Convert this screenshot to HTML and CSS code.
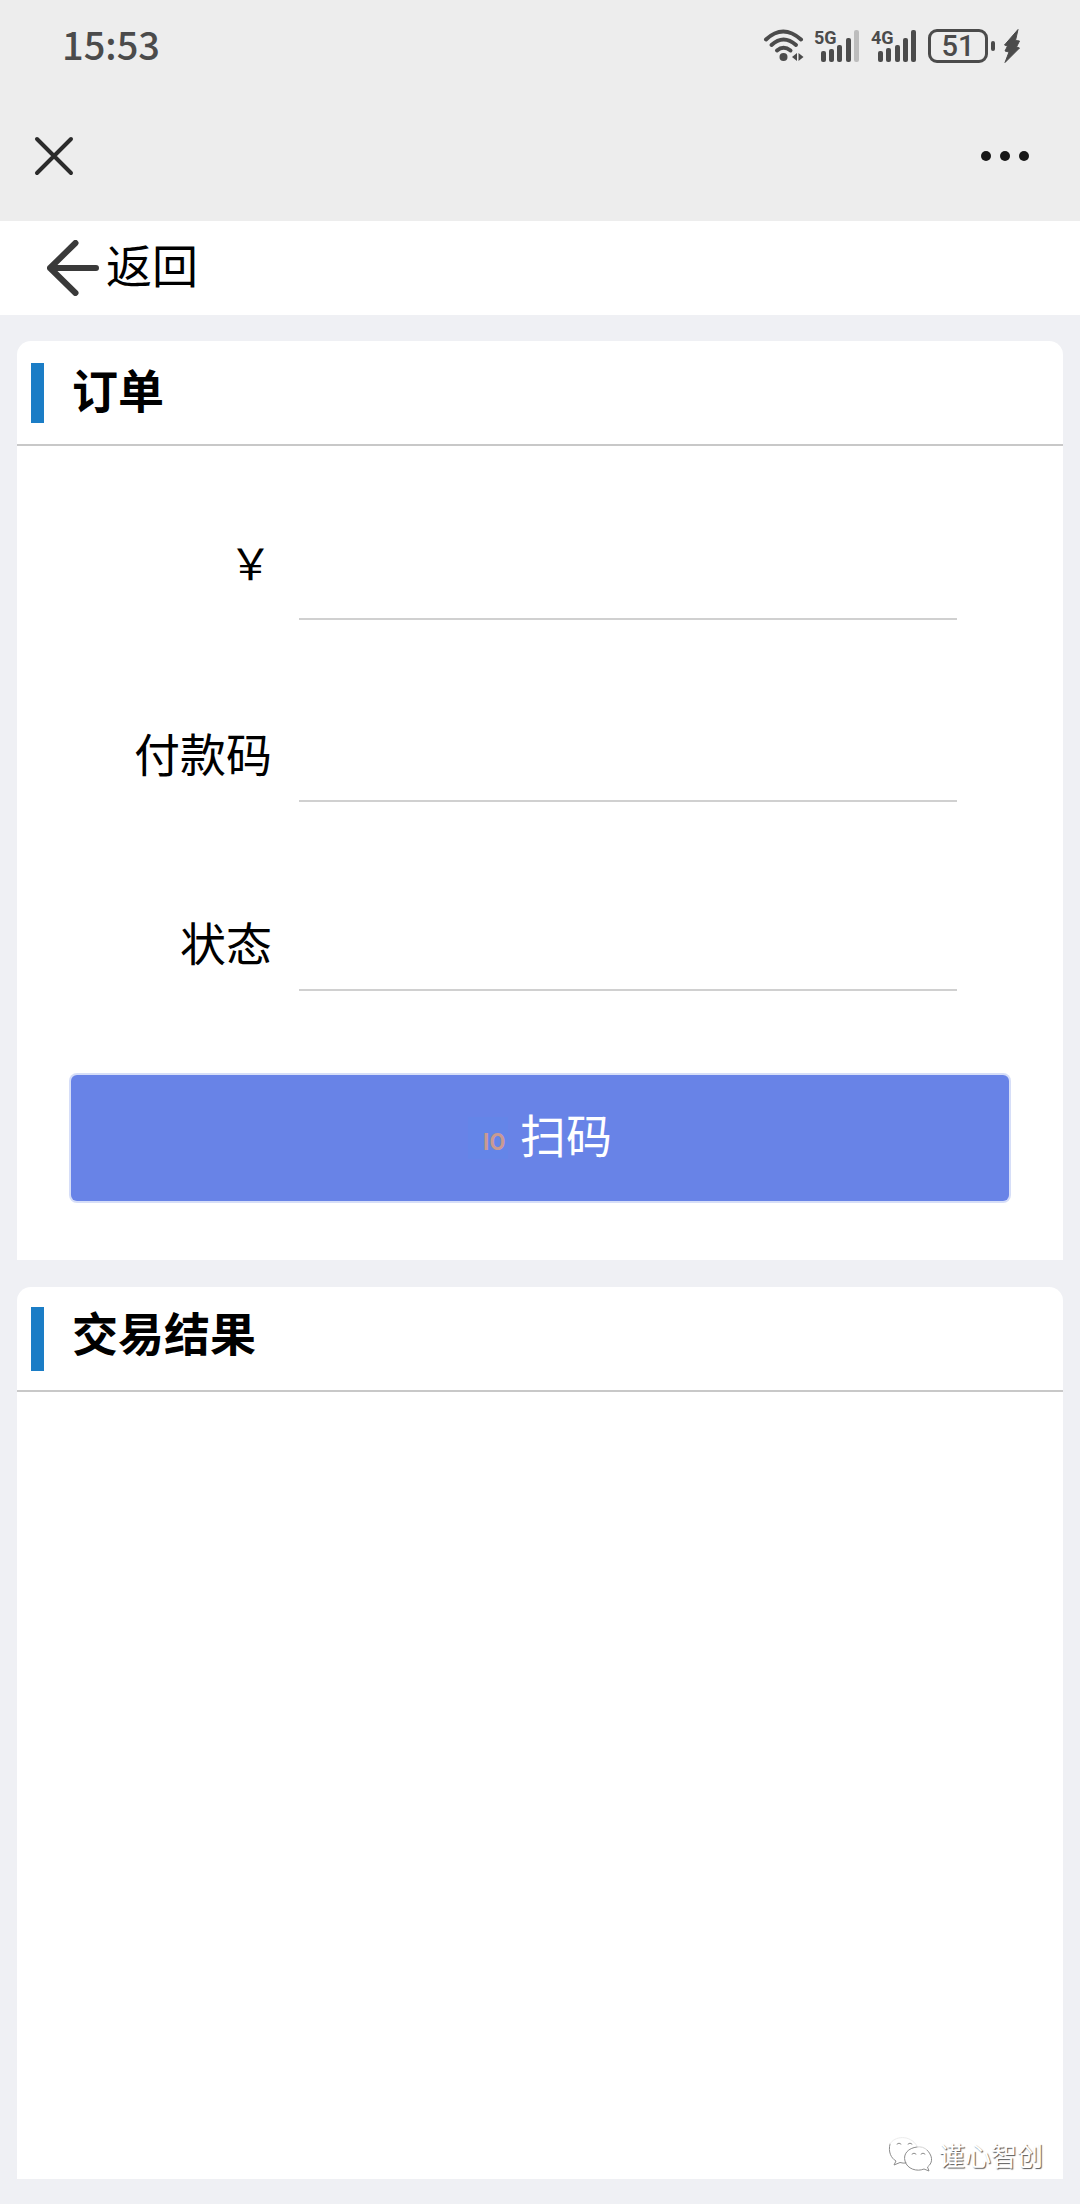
FILE: index.html
```html
<!DOCTYPE html>
<html lang="zh-CN">
<head>
<meta charset="utf-8">
<meta name="viewport" content="width=device-width, initial-scale=1">
<title>订单</title>
<link rel="stylesheet" href="styles.css">
</head>
<body>
<div class="status-bar">
  <span class="clock">15:53</span>
  <div class="status-icons">
    <svg class="wifi" width="42" height="34" viewBox="0 0 42 34" aria-hidden="true">
      <g fill="none" stroke="#4b4b4b" stroke-width="4" stroke-linecap="round">
        <path d="M3 10.500Q20 -5.500 38 10.500"/>
        <path d="M8.500 16Q20.500 5 33 16"/>
        <path d="M14 21.500Q20.500 16 27.500 21.500"/>
      </g>
      <circle cx="20.500" cy="28" r="4"/>
      <path d="M34 24v8l-5-4zM35.500 24v8l5-4z"/>
    </svg>
    <svg class="signal" width="48" height="46" viewBox="0 -6 48 46" aria-label="5G">
      <text x="0" y="15">5G</text>
      <rect x="7" y="22" width="5" height="11" rx="2"/>
      <rect x="15" y="20" width="5" height="13" rx="2"/>
      <rect x="23" y="16" width="5" height="17" rx="2"/>
      <rect x="32" y="9" width="5" height="24" rx="2"/>
      <rect class="off" x="40" y="1" width="5" height="32" rx="2"/>
    </svg>
    <svg class="signal" width="48" height="46" viewBox="0 -6 48 46" aria-label="4G">
      <text x="0" y="15">4G</text>
      <rect x="7" y="22" width="5" height="11" rx="2"/>
      <rect x="15" y="19" width="5" height="14" rx="2"/>
      <rect x="24" y="16" width="5" height="17" rx="2"/>
      <rect x="32" y="9" width="5" height="24" rx="2"/>
      <rect x="40" y="1" width="5" height="32" rx="2"/>
    </svg>
    <div class="battery"><span class="battery-level">51</span></div>
    <svg class="bolt" width="16" height="34" viewBox="0 0 16 34" aria-hidden="true">
      <path d="M14 .5L.5 16l3 1L1 22l4 1L1 33.500 15.500 19l-3-1L15.500 12l-4-.5z" stroke="#4b4b4b" stroke-width="1" stroke-linejoin="round"/>
    </svg>
  </div>
</div>

<nav class="title-bar">
  <button class="icon-button" type="button" aria-label="关闭">
    <svg width="40" height="40" viewBox="0 0 40 40"><path d="M3 3L37 37M37 3L3 37" fill="none" stroke="#2b2b2b" stroke-width="4" stroke-linecap="round"/></svg>
  </button>
  <button class="icon-button" type="button" aria-label="更多">
    <svg width="50" height="12" viewBox="0 0 50 12"><g fill="#161616"><circle cx="6" cy="6" r="5"/><circle cx="25" cy="6" r="5"/><circle cx="44" cy="6" r="5"/></g></svg>
  </button>
</nav>

<header class="back-bar">
  <a class="back" href="#">
    <svg width="52" height="56" viewBox="0 0 52 56" aria-hidden="true"><path d="M28.500 3L3 28L28.500 53M3 28H49" fill="none" stroke="#3a3a3a" stroke-width="6" stroke-linecap="round" stroke-linejoin="round"/></svg>
    <span class="back-text">返回</span>
  </a>
</header>

<main class="content">
  <section class="card">
    <h2 class="card-title"><span>订单</span></h2>
    <form class="form">
      <div class="field field-amount">
        <label for="amount">￥</label>
        <input id="amount" type="text">
      </div>
      <div class="field">
        <label for="code">付款码</label>
        <input id="code" type="text">
      </div>
      <div class="field">
        <label for="state">状态</label>
        <input id="state" type="text">
      </div>
      <button class="scan" type="button">
        <span class="scan-icon">IO</span>
        <span class="scan-text">扫码</span>
      </button>
    </form>
  </section>

  <section class="card card-result">
    <h2 class="card-title"><span>交易结果</span></h2>
    <div class="watermark">
      <svg width="46" height="40" viewBox="0 0 46 40" aria-hidden="true">
        <g fill="none" stroke="#8c8c8c" stroke-width="1" stroke-linecap="round">
          <path d="M2 9C0 17 3 23 8 26L6 30L12 27.500Q15 28.500 18 28"/>
          <path d="M2 9C6 1 22 -1 29 11" stroke="#ececec"/>
          <path d="M29 12C20 13 15 19 17 26C19 34 29 37 36 34L41 36L39.500 32C46 27 44 20 39 15"/>
          <path d="M29 12Q35 11 39 15" stroke="#d4d4d4"/>
          <path d="M9 9q2-2 4 0M20 9q2-2 4 0M24 19q2-2 4 0M33 19q2-2 4 0"/>
        </g>
      </svg>
      <span>谨心智创</span>
    </div>
  </section>
</main>
</body>
</html>
```
FILE: styles.css
```css
* {
  box-sizing: border-box;
}

body {
  margin: 0;
  min-height: 100vh;
  display: flex;
  flex-direction: column;
  background: #eff0f4;
  color: #000;
  font: 46px/60px "Noto Sans CJK SC", sans-serif;
}

button {
  border: 0;
  padding: 0;
  background: none;
  font: inherit;
}

svg {
  display: block;
}

.status-bar,
.title-bar {
  display: flex;
  align-items: center;
  justify-content: space-between;
  background: #ededed;
}

.status-bar {
  height: 92px;
  padding: 0 60px 0 62px;
}

.clock {
  padding-bottom: 4px;
  color: #4b4b4b;
  font-size: 38px;
  font-weight: 500;
}

.status-icons {
  display: flex;
  align-items: center;
  gap: 9px;
  fill: #4b4b4b;
}

.signal text {
  font: 700 18px Roboto, sans-serif;
}

.signal .off {
  fill: #bdbdbd;
}

.battery {
  display: flex;
  align-items: center;
}

.battery-level {
  width: 60px;
  border: 3px solid #4b4b4b;
  border-radius: 9px;
  color: #4b4b4b;
  font: 500 29px/28px Roboto, sans-serif;
  text-align: center;
}

.battery::after {
  content: "";
  width: 4px;
  height: 10px;
  margin-left: 3px;
  border-radius: 2px;
  background: #4b4b4b;
}

.title-bar {
  height: 129px;
  padding: 0 50px 2px 34px;
}

.back-bar {
  display: flex;
  align-items: center;
  height: 94px;
  padding: 0 47px;
  background: #fff;
}

.back {
  display: flex;
  align-items: center;
  gap: 7px;
  color: inherit;
  text-decoration: none;
}

.back-text {
  padding-bottom: 10px;
}

.content {
  flex: 1;
  display: flex;
  flex-direction: column;
  gap: 27px;
  padding: 26px 17px 25px;
}

.card {
  border-radius: 14px 14px 0 0;
  background: #fff;
}

.card-title {
  display: flex;
  align-items: center;
  gap: 28px;
  height: 105px;
  margin: 0;
  padding: 0 14px;
  border-bottom: 2px solid #c8c8c8;
  font-size: 46px;
  font-weight: 700;
}

.card-title span {
  padding-bottom: 10px;
}

.card-title::before {
  content: "";
  width: 13px;
  height: 60px;
  background: #1b7dc6;
}

.form {
  padding: 64px 54px 59px;
}

.field {
  display: flex;
  align-items: center;
  gap: 27px;
  height: 92px;
  margin-bottom: 97px;
  padding-right: 52px;
}

.field-amount {
  height: 110px;
  margin-bottom: 90px;
}

.field label {
  width: 201px;
  padding-bottom: 8px;
  text-align: right;
}

.field-amount label {
  font-size: 43px;
}

.field input {
  flex: 1;
  min-width: 0;
  height: 100%;
  padding: 0;
  border: 0;
  border-bottom: 2px solid #d0d0d0;
  background: none;
  font: inherit;
  outline: 0;
}

.scan {
  display: flex;
  align-items: center;
  justify-content: center;
  gap: 12px;
  width: 100%;
  height: 126px;
  margin-top: -13px;
  border-radius: 6px;
  background: #6883e7;
  box-shadow: 0 0 0 2px #d6def8;
  color: #fff;
}

.scan-icon {
  width: 40px;
  padding: 10px 0 0 12px;
  background: #6485e8;
  color: #c99a92;
  font: 700 23px/32px Roboto, sans-serif;
  text-align: center;
}

.scan-text {
  padding-bottom: 10px;
}

.card-result {
  flex: 1;
  display: flex;
  flex-direction: column;
}

.card-result .card-title::before {
  height: 64px;
}

.card-result .card-title span {
  padding-bottom: 16px;
}

.watermark {
  display: flex;
  align-items: center;
  gap: 5px;
  margin-top: auto;
  padding: 0 20px 4px;
  justify-content: flex-end;
  color: #fff;
  font-size: 26px;
  line-height: 40px;
  text-shadow: 1px 1px 1px #555;
}
```
